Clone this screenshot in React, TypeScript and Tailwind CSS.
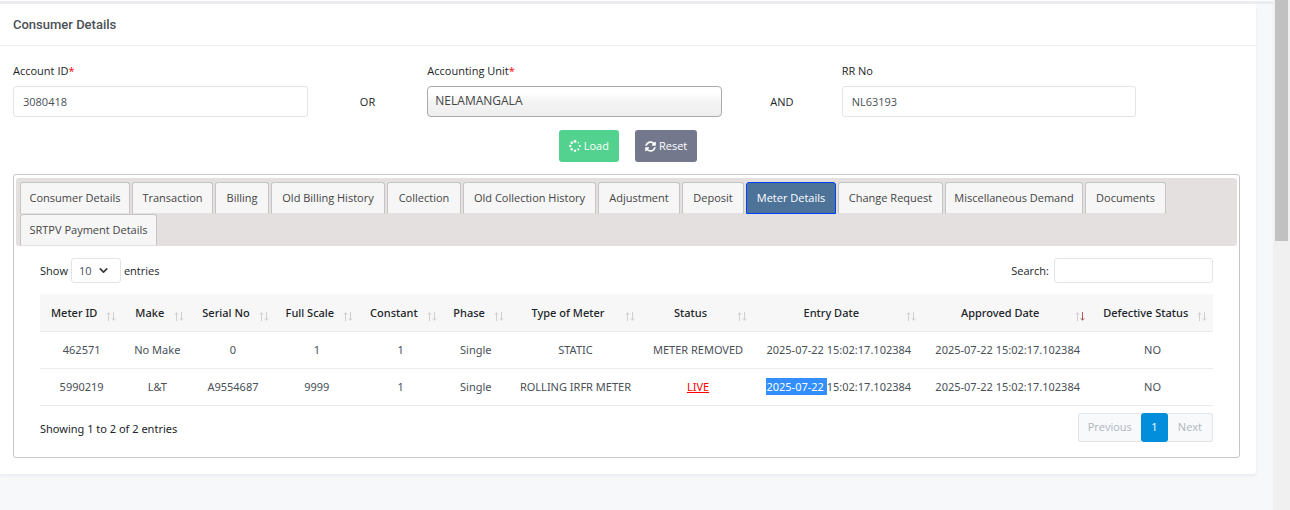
import React, { useState } from 'react';
import { ChevronDown } from 'lucide-react';
import { FaSyncAlt } from 'react-icons/fa';

interface Meter {
  id: string;
  make: string;
  serialNo: string;
  fullScale: string;
  constant: string;
  phase: string;
  type: string;
  status: string;
  entryDate: [string, string];
  approvedDate: string;
  defective: string;
}

const tabs = [
  { label: 'Consumer Details', width: 'w-[110px]' },
  { label: 'Transaction', width: 'w-[81px]' },
  { label: 'Billing', width: 'w-[54px]' },
  { label: 'Old Billing History', width: 'w-[114px]' },
  { label: 'Collection', width: 'w-[74px]' },
  { label: 'Old Collection History', width: 'w-[133px]' },
  { label: 'Adjustment', width: 'w-[82px]' },
  { label: 'Deposit', width: 'w-[62px]' },
  { label: 'Meter Details', width: 'w-[90px]' },
  { label: 'Change Request', width: 'w-[105px]' },
  { label: 'Miscellaneous Demand', width: 'w-[138px]' },
  { label: 'Documents', width: 'w-[81px]' },
  { label: 'SRTPV Payment Details', width: 'w-[137px]' },
];

const columns = [
  { label: 'Meter ID', width: 'w-[7.1%]' },
  { label: 'Make', width: 'w-[5.8%]' },
  { label: 'Serial No', width: 'w-[7.1%]' },
  { label: 'Full Scale', width: 'w-[7.2%]' },
  { label: 'Constant', width: 'w-[7.1%]' },
  { label: 'Phase', width: 'w-[5.7%]' },
  { label: 'Type of Meter', width: 'w-[11.3%]' },
  { label: 'Status', width: 'w-[9.6%]' },
  { label: 'Entry Date', width: 'w-[14.4%]' },
  { label: 'Approved Date', width: 'w-[14.4%]' },
  { label: 'Defective Status', width: 'w-[10.3%]' },
];

const meters: Meter[] = [
  {
    id: '462571',
    make: 'No Make',
    serialNo: '0',
    fullScale: '1',
    constant: '1',
    phase: 'Single',
    type: 'STATIC',
    status: 'METER REMOVED',
    entryDate: ['2025-07-22', '15:02:17.102384'],
    approvedDate: '2025-07-22 15:02:17.102384',
    defective: 'NO',
  },
  {
    id: '5990219',
    make: 'L&T',
    serialNo: 'A9554687',
    fullScale: '9999',
    constant: '1',
    phase: 'Single',
    type: 'ROLLING IRFR METER',
    status: 'LIVE',
    entryDate: ['2025-07-22', '15:02:17.102384'],
    approvedDate: '2025-07-22 15:02:17.102384',
    defective: 'NO',
  },
];

const SortArrows: React.FC<{ descending?: boolean }> = ({ descending }) => (
  <svg width="10" height="9" viewBox="0 0 10 9" fill="none" className="shrink-0">
    <path d="M2.5 9V1M0.8 2.7L2.5 0.7L4.2 2.7" stroke="#cfcfcf" />
    <path d="M7.5 0V8M5.8 6.3L7.5 8.3L9.2 6.3" stroke={descending ? '#a85a5a' : '#cfcfcf'} />
  </svg>
);

const Spinner: React.FC = () => (
  <svg width="12" height="12" viewBox="0 0 12 12" fill="currentColor">
    <circle cx="6" cy="1.4" r="1.4" />
    <circle cx="9.3" cy="2.7" r="0.8" />
    <circle cx="10.8" cy="6" r="1" />
    <circle cx="9.3" cy="9.3" r="1.1" />
    <circle cx="6" cy="10.7" r="1.2" />
    <circle cx="2.7" cy="9.3" r="1.2" />
    <circle cx="1.3" cy="6" r="1.2" />
    <circle cx="2.7" cy="2.7" r="1.3" />
  </svg>
);

const inputClass = 'w-full h-[31px] px-[9px] rounded-[3px] border border-[#e2e5e8] bg-white text-[#495057] text-[11px] outline-none';

const App: React.FC = () => {
  const [activeTab, setActiveTab] = useState('Meter Details');
  const [accountId, setAccountId] = useState('3080418');
  const [rrNo, setRrNo] = useState('NL63193');

  return (
    <div className="flex min-h-screen bg-[#f6f8fa] font-['Open_Sans','Noto_Sans',sans-serif] text-[11px] leading-4 text-[#212529]">
      <main className="flex-1 min-w-0 border-t border-white">
        <div className="h-[3px] bg-[#ebecf1]" />
        <section className="mr-[17px] bg-white rounded-r-[3px] shadow-[0_2px_3px_#e9ecf1]">
          <header className="h-[42px] px-[13px] flex items-center border-b border-[#eeeff1]">
            <h1 className="font-['Roboto',sans-serif] text-[13px] font-medium text-[#4a5056]">Consumer Details</h1>
          </header>

          <div className="pt-[17px] pb-4">
            <form onSubmit={(e) => e.preventDefault()}>
              <div className="grid grid-cols-12 items-end pl-[5px] pr-2">
                <div className="col-span-3 px-2">
                  <label htmlFor="account-id" className="block mb-[7px]">
                    Account ID<span className="text-[#f00]">*</span>
                  </label>
                  <input id="account-id" className={inputClass} value={accountId} onChange={(e) => setAccountId(e.target.value)} />
                </div>
                <div className="pb-[7px] text-center">OR</div>
                <div className="col-span-3 px-2">
                  <label htmlFor="unit" className="block mb-[7px]">
                    Accounting Unit<span className="text-[#f00]">*</span>
                  </label>
                  <select
                    id="unit"
                    className="w-full h-[31px] px-[7px] pb-px appearance-none rounded border border-[#aaa] bg-linear-to-b from-white from-20% via-[#f4f4f4] via-52% to-[#eee] text-[#444] text-[12px] outline-none"
                  >
                    <option>NELAMANGALA</option>
                  </select>
                </div>
                <div className="pb-[7px] text-center">AND</div>
                <div className="col-span-3 px-2">
                  <label htmlFor="rr-no" className="block mb-[7px]">RR No</label>
                  <input id="rr-no" className={inputClass} value={rrNo} onChange={(e) => setRrNo(e.target.value)} />
                </div>
              </div>

              <div className="mt-[13px] flex justify-center gap-4">
                <button type="button" className="h-8 px-[10px] flex items-center gap-[3px] rounded-[3px] bg-[#52d28e] text-white text-[11px]">
                  <Spinner />
                  Load
                </button>
                <button type="button" className="h-8 px-[10px] flex items-center gap-[3px] rounded-[3px] bg-[#74788d] text-white text-[11px]">
                  <FaSyncAlt size={11} />
                  Reset
                </button>
              </div>
            </form>

            <div className="mt-3 ml-[13px] mr-4 p-[2px] pt-[3px] pb-[15px] rounded-[3px] border border-[#c5c5c5]">
              <div role="tablist" className="flex flex-wrap gap-x-[2px] px-1 pt-1 rounded-[3px] bg-[#e4e0df]">
                {tabs.map(({ label, width }) => (
                  <button
                    key={label}
                    role="tab"
                    aria-selected={label === activeTab}
                    onClick={() => setActiveTab(label)}
                    className={`${width} h-8 whitespace-nowrap rounded-t-[3px] border ${
                      label === activeTab
                        ? 'border-[#003eff] bg-[#4d7399] text-white'
                        : 'border-[#c5c5c5] border-b-[#e4e0df] bg-[#f6f6f6] text-[#454545]'
                    }`}
                  >
                    {label}
                  </button>
                ))}
              </div>

              <div className="px-6 pt-3">
                <div className="flex justify-between">
                  <div className="flex items-center gap-[3px]">
                    <label htmlFor="page-size">Show</label>
                    <span className="grid items-center">
                      <select id="page-size" className="col-start-1 row-start-1 w-[50px] h-[25px] pl-[7px] appearance-none rounded-[3px] border border-[#e2e5e8] bg-white text-[#495057] outline-none">
                        <option>10</option>
                      </select>
                      <ChevronDown size={13} strokeWidth={3} className="col-start-1 row-start-1 justify-self-end mr-[11px] text-[#343a40] pointer-events-none" />
                    </span>
                    <span>entries</span>
                  </div>
                  <div className="flex items-center gap-[5px]">
                    <label htmlFor="search">Search:</label>
                    <input id="search" type="search" className="w-[159px] h-[25px] px-2 rounded-[3px] border border-[#e2e5e8] bg-white outline-none" />
                  </div>
                </div>

                <table className="mt-[11px] w-full table-fixed border-collapse font-['Noto_Sans',sans-serif] text-center text-[#495057]">
                  <thead>
                    <tr className="h-[37px] bg-[#f7f7f7] border-b border-[#e9ebee]">
                      {columns.map((col) => (
                        <th key={col.label} className={`${col.width} p-0 pl-[11px] pr-[7px] font-medium text-[#212529]`}>
                          <div className="flex items-start pt-px">
                            <span className="flex-1 whitespace-nowrap">{col.label}</span>
                            <span className="ml-[9px] pt-[7px]">
                              <SortArrows descending={col.label === 'Approved Date'} />
                            </span>
                          </div>
                        </th>
                      ))}
                    </tr>
                  </thead>
                  <tbody>
                    {meters.map((m) => (
                      <tr key={m.id} className="h-[37px] border-b border-[#e9ebee] whitespace-nowrap">
                        <td>{m.id}</td>
                        <td>{m.make}</td>
                        <td>{m.serialNo}</td>
                        <td>{m.fullScale}</td>
                        <td>{m.constant}</td>
                        <td>{m.phase}</td>
                        <td>{m.type}</td>
                        <td>
                          {m.status === 'LIVE' ? <a href="#live" className="text-[#f00] underline">{m.status}</a> : m.status}
                        </td>
                        <td>
                          <span className={m.status === 'LIVE' ? 'py-px bg-[#338fff] text-white' : ''}>{m.entryDate[0]} </span>
                          {m.entryDate[1]}
                        </td>
                        <td>{m.approvedDate}</td>
                        <td>{m.defective}</td>
                      </tr>
                    ))}
                  </tbody>
                </table>

                <div className="mt-[7px] flex justify-between items-center font-['Noto_Sans',sans-serif]">
                  <p className="mt-1">Showing 1 to 2 of 2 entries</p>
                  <nav className="flex h-[29px] font-['Open_Sans',sans-serif]">
                    <button disabled className="px-[9px] rounded-l-[3px] border border-r-0 border-[#e2e5e8] bg-[#f8f9fb] text-[#adb5bd]">Previous</button>
                    <button className="w-[27px] rounded-[3px] bg-[#038edc] text-white">1</button>
                    <button disabled className="px-[10px] rounded-r-[3px] border border-l-0 border-[#e2e5e8] bg-[#f8f9fb] text-[#adb5bd]">Next</button>
                  </nav>
                </div>
              </div>
            </div>
          </div>
        </section>
      </main>

      <aside className="w-[17px] shrink-0 px-[2px] bg-[#f0f0f0]">
        <div className="h-[241px] bg-[#c1c1c1]" />
      </aside>
    </div>
  );
};

export default App;
